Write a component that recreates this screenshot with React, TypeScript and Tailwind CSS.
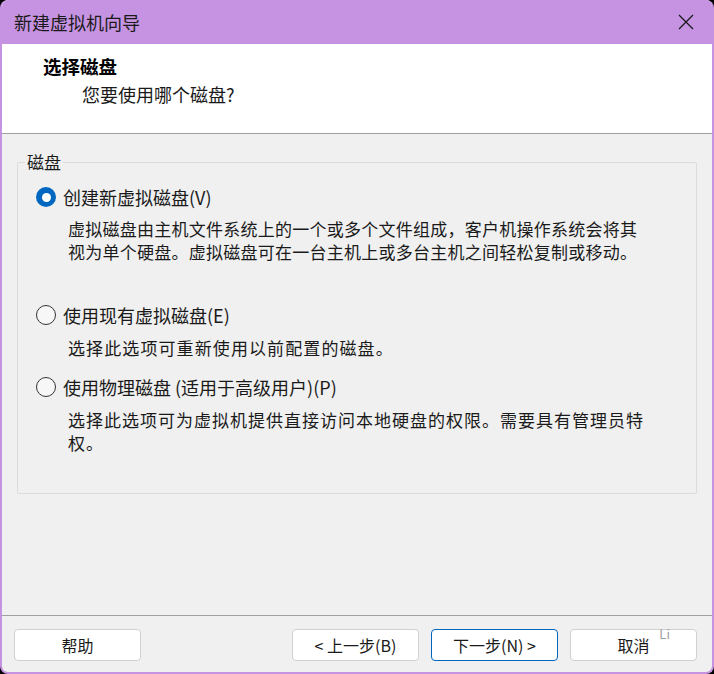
import React from "react";

const font = { fontFamily: '"Noto Sans CJK SC", "Noto Sans", sans-serif' };

function Radio({ checked }: { checked?: boolean }) {
  if (checked) {
    return (
      <span className="flex h-[20px] w-[20px] shrink-0 items-center justify-center rounded-full bg-[#0067c0]">
        <span className="h-[9px] w-[9px] rounded-full bg-white" />
      </span>
    );
  }
  return <span className="h-[20px] w-[20px] shrink-0 rounded-full border border-[#333333] bg-[#f7f7f7]" />;
}

function Btn({ children, primary }: { children: React.ReactNode; primary?: boolean }) {
  return (
    <button
      className={
        "flex h-[32px] w-[127px] items-center justify-center rounded-[4px] bg-white text-[16px] text-[#1a1a1a] " +
        (primary ? "border border-[#0067c0]" : "border border-[#d0d0d0]")
      }
    >
      {children}
    </button>
  );
}

export default function App() {
  return (
    <div className="h-[674px] w-[714px] bg-black" style={font}>
      <div className="flex h-full w-full flex-col overflow-hidden rounded-[8px] border-2 border-t-0 border-[#c693e2] bg-[#f0f0f0]">
        <div className="flex h-[44px] shrink-0 items-center justify-between bg-[#c693e2] pl-[12px] pr-[18px]">
          <span className="text-[18px] leading-none text-[#1a1a1a]">新建虚拟机向导</span>
          <svg width="16" height="16" viewBox="0 0 16 16">
            <path d="M1 1 L15 15 M15 1 L1 15" stroke="#1a1a1a" strokeWidth="1.3" fill="none" />
          </svg>
        </div>
        <div className="h-[90px] shrink-0 border-b border-[#a0a0a0] bg-white pl-[41px] pt-[10px]">
          <div className="text-[18.5px] font-bold leading-[24px] text-black">选择磁盘</div>
          <div className="ml-[39px] mt-[4px] text-[18px] leading-[24px] text-[#1a1a1a]">您要使用哪个磁盘?</div>
        </div>
        <div className="flex flex-1 flex-col">
          <div className="px-[15px] pt-[16px]">
            <fieldset className="h-[344px] rounded-[2px] border border-[#dcdcdc] pl-[18px] pr-[10px]">
              <legend className="ml-[-11px] px-[2px] text-[17px] leading-[24px] text-[#1a1a1a]">磁盘</legend>
              <div className="mt-[11px] flex h-[24px] items-center gap-[7px]">
                <Radio checked />
                <span className="text-[18px] text-[#1a1a1a]">创建新虚拟磁盘(V)</span>
              </div>
              <div className="ml-[32px] mt-[8px] text-[17px] leading-[23px] tracking-[0.25px] text-[#1a1a1a]">
                <div>虚拟磁盘由主机文件系统上的一个或多个文件组成，客户机操作系统会将其</div>
                <div>视为单个硬盘。虚拟磁盘可在一台主机上或多台主机之间轻松复制或移动。</div>
              </div>
              <div className="mt-[40px] flex h-[24px] items-center gap-[7px]">
                <Radio />
                <span className="text-[18px] text-[#1a1a1a]">使用现有虚拟磁盘(E)</span>
              </div>
              <div className="ml-[32px] mt-[9px] text-[17px] leading-[23px] tracking-[1.1px] text-[#1a1a1a]">
                选择此选项可重新使用以前配置的磁盘。
              </div>
              <div className="mt-[16px] flex h-[24px] items-center gap-[7px]">
                <Radio />
                <span className="text-[18px] text-[#1a1a1a]">使用物理磁盘 (适用于高级用户)(P)</span>
              </div>
              <div className="ml-[32px] mt-[9px] text-[17px] leading-[23px] tracking-[1px] text-[#1a1a1a]">
                <div>选择此选项可为虚拟机提供直接访问本地硬盘的权限。需要具有管理员特</div>
                <div>权。</div>
              </div>
            </fieldset>
          </div>
          <div className="flex-1" />
          <div className="border-t border-[#a0a0a0] pb-[11px] pl-[12px] pr-[15px] pt-[13px]">
            <div className="relative flex items-center">
              <Btn>帮助</Btn>
              <div className="flex-1" />
              <div className="flex gap-[12px]">
                <Btn>&lt; 上一步(B)</Btn>
                <Btn primary>下一步(N) &gt;</Btn>
                <Btn>取消</Btn>
              </div>
              <span className="absolute right-[27px] top-[-5px] text-[13px] text-[#a0a0a0]">Li</span>
            </div>
          </div>
        </div>
      </div>
    </div>
  );
}
